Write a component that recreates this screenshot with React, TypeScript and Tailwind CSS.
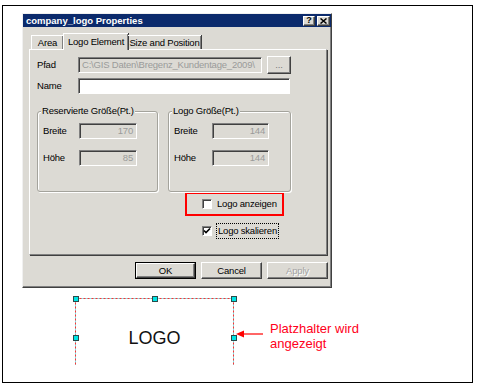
import React from "react";

const sunken =
  "border border-t-[#808080] border-l-[#808080] border-r-white border-b-white shadow-[inset_1px_1px_0_#404040]";
const raised =
  "border border-t-white border-l-white border-r-[#404040] border-b-[#404040] shadow-[inset_-1px_-1px_0_#808080]";

function Field({ w, value, align = "right", white = false }: { w: string; value: string; align?: "left" | "right"; white?: boolean }) {
  return (
    <div
      className={`${w} h-[16px] ${sunken} ${white ? "bg-white" : "bg-[#dcdad4]"} flex items-center px-[3px] text-[#9a9a9a] ${
        align === "right" ? "justify-end" : "justify-start"
      } overflow-hidden whitespace-nowrap`}
    >
      {value}
    </div>
  );
}

function Check({ checked }: { checked?: boolean }) {
  return (
    <div className={`w-[10px] h-[10px] bg-white ${sunken} flex items-center justify-center`}>
      {checked && (
        <svg width="8" height="8" viewBox="0 0 8 8">
          <polyline points="1,3.5 3,5.5 7,1.5" fill="none" stroke="#000" strokeWidth="1.6" />
        </svg>
      )}
    </div>
  );
}

function Group({ title, w, left, w2 }: { title: string; w: string; left: string; w2: string }) {
  return (
    <div className={`relative ${w} h-[81px] border border-[#a4a39c] rounded-[3px] shadow-[inset_1px_1px_0_#ffffff,1px_1px_0_#ffffff]`}>
      <div className="absolute -top-[7px] left-[3px] px-[1px] bg-[#dcdad4] leading-[12px] whitespace-nowrap">{title}</div>
      <div className={`flex items-center mt-[11px] pl-[5px]`}>
        <div className={left}>Breite</div>
        <Field w={w2} value={title.startsWith("Res") ? "170" : "144"} />
      </div>
      <div className={`flex items-center mt-[11px] pl-[5px]`}>
        <div className={left}>Höhe</div>
        <Field w={w2} value={title.startsWith("Res") ? "85" : "144"} />
      </div>
    </div>
  );
}

function Button({ label, def, disabled }: { label: string; def?: boolean; disabled?: boolean }) {
  if (def) {
    return (
      <div className="w-[61px] h-[17px] border border-black">
        <div className={`w-full h-full ${raised} flex items-center justify-center`}>{label}</div>
      </div>
    );
  }
  return (
    <div
      className={`w-[61px] h-[17px] ${raised} flex items-center justify-center ${
        disabled ? "text-[#a3a3a3] [text-shadow:1px_1px_0_#ffffff]" : ""
      }`}
    >
      {label}
    </div>
  );
}

function Dialog() {
  return (
    <div className="w-[310px] h-[275px] bg-[#dcdad4] border border-t-[#f0f0f0] border-l-[#f0f0f0] border-r-[#404040] border-b-[#404040] shadow-[inset_-1px_-1px_0_#808080] text-[9.5px] tracking-[-0.2px] text-black leading-none flex flex-col">
      {/* title bar */}
      <div className="h-[13px] bg-[#0b2a6c] flex items-center justify-between pl-[3px] pr-[1px]">
        <span className="text-white font-bold text-[9.5px] tracking-normal">company_logo Properties</span>
        <div className="flex gap-[2px]">
          <div className={`w-[12px] h-[10px] bg-[#dcdad4] ${raised} flex items-center justify-center font-bold text-[9px]`}>?</div>
          <div className={`w-[13px] h-[10px] bg-[#dcdad4] ${raised} flex items-center justify-center`}>
            <svg width="7" height="6" viewBox="0 0 7 6">
              <path d="M0.5 0.5 L6.5 5.5 M6.5 0.5 L0.5 5.5" stroke="#000" strokeWidth="1.5" />
            </svg>
          </div>
        </div>
      </div>
      {/* tabs */}
      <div className="flex items-end h-[16px] mt-[6px] ml-[8px] relative z-10 whitespace-nowrap">
        <div className="h-[14px] w-[32px] border-t border-l border-white shadow-[inset_-1px_0_0_#808080] flex items-center justify-center">
          Area
        </div>
        <div className="h-[17px] w-[65px] -mb-[1px] bg-[#dcdad4] border-t border-l border-white shadow-[inset_-1px_0_0_#808080,1px_0_0_#404040] flex items-start pt-[3px] justify-center">
          Logo Element
        </div>
        <div className="h-[14px] w-[73px] border-t border-white shadow-[inset_-1px_0_0_#808080,1px_0_0_#404040] flex items-center justify-center">
          Size and Position
        </div>
      </div>
      {/* panel */}
      <div className="ml-[6px] w-[298px] h-[206px] border border-t-white border-l-white border-r-[#808080] border-b-[#808080] shadow-[1px_1px_0_#404040] flex flex-col">
        <div className="flex items-center mt-[6px] pl-[7px] h-[18px]">
          <div className="w-[41px]">Pfad</div>
          <Field w="w-[184px]" value="C:\GIS Daten\Bregenz_Kundentage_2009\" align="left" />
          <div className={`ml-[5px] w-[24px] h-[18px] ${raised} flex items-center justify-center text-[#777]`}>...</div>
        </div>
        <div className="flex items-center mt-[4px] pl-[7px]">
          <div className="w-[41px]">Name</div>
          <Field w="w-[212px]" value="" white />
        </div>
        <div className="flex mt-[17px] pl-[7px] gap-[10px]">
          <Group title="Reservierte Größe(Pt.)" w="w-[121px]" left="w-[36px]" w2="w-[58px]" />
          <Group title="Logo Größe(Pt.)" w="w-[123px]" left="w-[38px]" w2="w-[57px]" />
        </div>
        <div className="ml-[155px] w-[99px] h-[24px] border-2 border-[#ff0000] flex items-center pl-[15px] gap-[5px]">
          <Check />
          <span>Logo anzeigen</span>
        </div>
        <div className="ml-[172px] mt-[7px] flex items-center gap-[4px]">
          <Check checked />
          <span className="border border-dotted border-black px-[1px] py-[2px]">Logo skalieren</span>
        </div>
      </div>
      {/* buttons */}
      <div className="flex justify-end gap-[5px] mt-[7px] pr-[3px]">
        <Button label="OK" def />
        <Button label="Cancel" />
        <Button label="Apply" disabled />
      </div>
    </div>
  );
}

function Handle({ x, y }: { x: number; y: number }) {
  return (
    <div
      className="absolute w-[6px] h-[6px] bg-[#00e5e5] border border-[#2a4a4a]"
      style={{ left: x, top: y }}
    />
  );
}

function LogoArea() {
  return (
    <div className="flex items-start mt-[8px] ml-[51px]">
      <div className="relative w-[163px] h-[69px]">
        <svg className="absolute inset-0" width="163" height="69">
          <path d="M2.5 2.5 H160.5 M2.5 2.5 V69 M160.5 2.5 V69" stroke="#7fe8ec" strokeWidth="1" fill="none" />
          <path d="M2.5 2.5 H160.5 M2.5 2.5 V69 M160.5 2.5 V69" stroke="#ff3030" strokeWidth="1" strokeDasharray="2 2" fill="none" />
        </svg>
        <Handle x={0} y={0} />
        <Handle x={79} y={0} />
        <Handle x={158} y={0} />
        <Handle x={0} y={39} />
        <Handle x={158} y={39} />
        <div className="flex justify-center pt-[33px] text-[18px] leading-none text-[#111]">LOGO</div>
      </div>
      <svg className="mt-[33px]" width="34" height="10" viewBox="0 0 34 10">
        <line x1="6" y1="5" x2="27" y2="5" stroke="#ff0000" strokeWidth="1.2" />
        <polygon points="0,5 8,1.5 8,8.5" fill="#ff0000" />
      </svg>
      <div className="mt-[25px] text-[13px] leading-[15px] text-[#ff0020]">
        <div>Platzhalter wird</div>
        <div>angezeigt</div>
      </div>
    </div>
  );
}

export default function App() {
  return (
    <div className="w-[477px] h-[386px] bg-white pt-[5px] pl-[2px] font-['Liberation_Sans',Arial,sans-serif]">
      <div className="w-[471px] h-[378px] border border-black pl-[19px] pt-[7px] flex flex-col">
        <Dialog />
        <LogoArea />
      </div>
    </div>
  );
}
